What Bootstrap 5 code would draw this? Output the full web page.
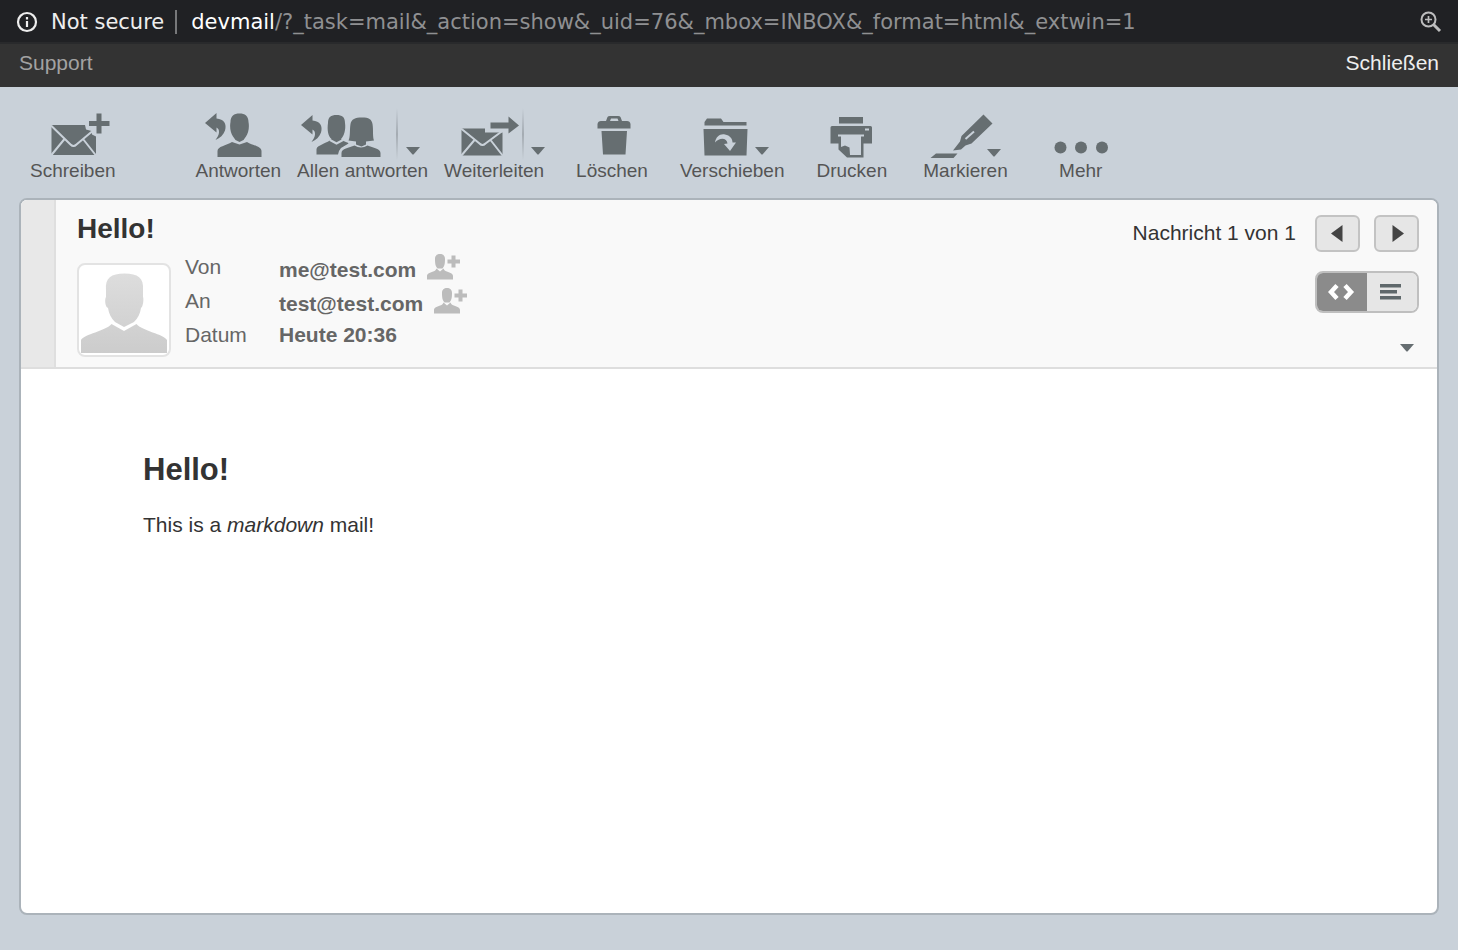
<!DOCTYPE html>
<html lang="de">
<head>
<meta charset="utf-8">
<meta name="viewport" content="width=device-width, initial-scale=1">
<title>Hello!</title>
<link href="https://cdn.jsdelivr.net/npm/bootstrap@5.3.0/dist/css/bootstrap.min.css" rel="stylesheet">
<style>
  body { background: #c9d1d9; color: #333; font: 21px/28px "Liberation Sans", Arial, sans-serif; }
  button { border: 0; background: none; padding: 0; color: inherit; }
  svg { display: block; }
  .address-bar { height: 44px; padding: 2px 16px 0; background: #202124; border-bottom: 2px solid #292a2c; color: #eee; font-family: "DejaVu Sans", sans-serif; }
  .address-bar .security { gap: 13px; }
  .address-bar .divider { width: 2px; height: 24px; background: #77787a; margin: 0 14px 0 11px; }
  .address-bar .host { color: #fff; }
  .address-bar .query { color: #8f9092; }
  .top-line { height: 43px; padding: 0 19px 5px; background: #333; }
  .top-line a { color: #eee; text-decoration: none; }
  .top-line a.muted-link { color: #a2a2a2; }
  .toolbar { padding: 21px 30px 16px; gap: 16px; font-size: 19px; line-height: 22px; color: #555; fill: #666e71; }
  .tool { display: flex; flex-direction: column; align-items: center; white-space: nowrap; }
  .cut { fill: none; stroke: #c9d1d9; stroke-width: 2; }
  .caret { position: absolute; top: 39px; right: 8px; }
  .caret.inset { right: 15px; }
  .caret.low { top: 41px; right: 7px; }
  .split::before { content: ""; position: absolute; top: 0; right: 30px; width: 2px; height: 52px; background: linear-gradient(transparent, #a4abb2, transparent); }
  .split.tight::before { right: 20px; }
  .split.tight .caret { right: -1px; }
  .gap-sm { margin-left: 16px; }
  .gap-md { margin-left: 20px; }
  .gap-lg { margin-left: 29px; }
  .gap-xl { margin-left: 64px; }
  .message { margin: 0 19px 35px; background: #fff; border: 2px solid #abb3ba; border-radius: 8px; }
  .message-head { background: #f9f9f9; border-bottom: 2px solid #dedede; min-height: 169px; }
  .side-strip { width: 35px; background: #e8e8e8; border-right: 2px solid #dfdfdf; }
  .head-main { padding: 15px 0 10px 21px; }
  .head-main h1 { font-size: 28px; line-height: 28px; font-weight: bold; margin: 0 0 10px; }
  .avatar { margin-top: 10px; border: 2px solid #e3e3e3; border-radius: 8px; background: #fff; width: 94px; height: 94px; }
  .fields { margin-left: 14px; color: #666; }
  .fields tr { height: 34px; }
  .fields th, .fields td { padding: 0; vertical-align: top; }
  .fields th { font-weight: normal; width: 94px; }
  .fields td { font-weight: bold; }
  .fields .address { padding-top: 3px; }
  .fields a { color: inherit; text-decoration: none; }
  .fields button { margin: -2px 0 0 11px; fill: #bcbcbc; }
  .head-side { padding: 15px 18px 0 0; }
  .pager { height: 37px; }
  .pager span { margin-right: 5px; padding-bottom: 1px; }
  .pager button { width: 45px; height: 37px; margin-left: 14px; border: 2px solid #c3c3c3; border-radius: 6px; background: #e6e6e6; fill: #444; }
  .views { border: 2px solid #bfbfbf; border-radius: 8px; overflow: hidden; margin-top: 19px; height: 42px; }
  .views button { width: 50px; background: #e6e6e6; }
  .views button.active { background: #8b8b8b; }
  .more-head { margin: 31px 5px 0 0; fill: #666e71; }
  .mail-body { padding: 83px 122px; }
  .mail-body h2 { font-size: 31px; line-height: 36px; font-weight: bold; margin: 0 0 23px; }
</style>
</head>
<body class="min-vh-100 d-flex flex-column">

<svg width="0" height="0" class="position-absolute" aria-hidden="true">
  <defs>
    <symbol id="down" viewBox="0 0 14 8"><path d="M0 0H14L7.500 7.500H6.500Z"/></symbol>
    <symbol id="reply" viewBox="0 0 22 28"><path d="M0 10 11.500 0V5.500C19 6 22 11 20 17.500C18.500 22 15 25 10.500 27C14.500 22 15.500 16.500 11.500 14.500V19.500Z"/></symbol>
    <symbol id="add-person" viewBox="0 0 34 26"><path d="M8 5C8 1.500 10 0 13 0S18 1.500 18 5C18 10 17.500 12 15.500 14.500H10.500C8.500 12 8 10 8 5ZM0 25.500V22C0 19 4 18.500 7.500 17C8.500 16.500 9 15.500 9.500 14.500L13 17.500L16.500 14.500C17 15.500 17.500 16.500 18.500 17C22 18.500 26 19 26 22V25.500ZM24.500 1.500H28.500V5.500H33V9.500H28.500V13.500H24.500V9.500H20.500V5.500H24.500Z"/></symbol>
  </defs>
</svg>

<header>
  <div class="address-bar d-flex align-items-center">
    <button type="button" class="security d-flex align-items-center text-nowrap">
      <svg width="22" height="22" viewBox="0 0 22 22" fill="none" stroke="#eee" stroke-width="2.2"><circle cx="11" cy="11" r="9"/><path d="M11 10V16M11 6V8.400"/></svg>
      Not secure
    </button>
    <span class="divider"></span>
    <span class="host text-nowrap">devmail<span class="query">/?_task=mail&amp;_action=show&amp;_uid=76&amp;_mbox=INBOX&amp;_format=html&amp;_extwin=1</span></span>
    <button type="button" class="ms-auto" aria-label="Zoom">
      <svg width="22" height="22" viewBox="0 0 22 22" fill="none" stroke="#bdbdbe"><circle cx="8.500" cy="8.500" r="7" stroke-width="2"/><path d="M13.500 13.500 20 20" stroke-width="3"/><path d="M5 8.500H12M8.500 5V12" stroke-width="1.700"/></svg>
    </button>
  </div>
  <nav class="top-line d-flex align-items-center justify-content-between">
    <a class="muted-link" href="#">Support</a>
    <a href="#">Schließen</a>
  </nav>
</header>

<div class="toolbar d-flex" role="toolbar" aria-label="Nachricht">
  <button type="button" class="tool">
    <svg width="84" height="52" viewBox="31 108 84 52"><path d="M51.500 125H85L86 129.500L91.500 131L92 134.500L96 136.500V155H51.500ZM96.500 113.500H101.500V121H109.500V126H101.500V133.500H96.500V126H89V121H96.500Z"/><path class="cut" d="M51 125.500 70.500 144.500Q73.500 147.500 76.500 144.500L92 131.500M51 155.500 64.500 139M96 155.500 83 139"/></svg>
    Schreiben
  </button>
  <button type="button" class="tool gap-xl">
    <svg width="84" height="52" viewBox="196 108 84 52"><use href="#reply" x="205" y="113" width="22" height="28"/><path d="M230.500 122C230.500 116 234 113.500 239.500 113.500S248.500 116 248.500 122C249.500 127 248.500 133 246 136.500L243.500 140L239.500 142L235.500 140L233 136.500C230.500 133 229.500 127 230.500 122ZM217.500 157V151C217.500 146.500 226 145.500 232 142L239.500 144.500L247 142C253 145.500 261.500 146.500 261.500 151V157Z"/></svg>
    Antworten
  </button>
  <div class="position-relative split">
    <button type="button" class="tool">
      <svg width="128" height="52" viewBox="299 108 128 52"><use href="#reply" x="301" y="115" width="22" height="28"/><path d="M328 123C328 117 331 115 336.500 115S345 117 345 123C346 130 344 136 341 139C343 142 348 142 348.500 143.500L341 148Q339 150 338 154.500H316.500V149C317 145 328 143 331.500 139C328 136 327 130 328 123Z"/><path class="cut" d="M330 140 336.500 143.500 343 140" stroke-width="1.500"/><path d="M348.500 140.500C350.500 137 349.500 130 350.500 124C351.500 119 355 117.500 362 117.500S371.500 119 372.500 124C373.500 130 372.500 137 374 140.500L366 141.500V144.500L361.500 146.500L356 144.500V141.500ZM341.500 157V153C341.500 148.500 349 148 354.500 145.500Q361 149.500 367.500 145.500C373 148 380.500 148.500 380.500 153V157Z"/></svg>
      Allen antworten
    </button>
    <button type="button" class="caret" aria-label="Antwortoptionen"><svg width="14" height="8"><use href="#down"/></svg></button>
  </div>
  <div class="position-relative split tight">
    <button type="button" class="tool">
      <svg width="98" height="52" viewBox="445 108 98 52"><path d="M461.500 128.500H485V132.500H502.500V155.500H461.500ZM490.500 122.500H508.500V116.500L519 125.500L508.500 133.500V128.500H490.500Z"/><path class="cut" d="M461 128.500 479.500 143.500Q482.500 146.500 485.500 143.500L503 130.500M461 156 474.500 140M503 156 490.500 140"/></svg>
      Weiterleiten
    </button>
    <button type="button" class="caret" aria-label="Weiterleitungsoptionen"><svg width="14" height="8"><use href="#down"/></svg></button>
  </div>
  <button type="button" class="tool gap-sm">
    <svg width="70" height="52" viewBox="577 108 70 52"><path d="M597.500 128.500V124Q598 121 601 121H606L607.500 117Q608 116 610 116H618Q620 116 620.500 117L622 121H627Q630 121 630.500 124V128.500ZM610 121H618.500L617.500 118.500H611ZM601.500 131H627L625.500 154.500H603Z" fill-rule="evenodd"/></svg>
    Löschen
  </button>
  <div class="position-relative gap-sm">
    <button type="button" class="tool">
      <svg width="102" height="52" viewBox="682 108 102 52"><path d="M705.500 125.500V122L708 118.500H722L724.500 122H747.500V125.500ZM704.500 129H748.500L747.500 155.500H705.500Z"/><path fill="#c9d1d9" d="M716 142.500C717 136.500 721 133.500 726 134.500C731 135.500 733.500 138.500 733.500 142.500L737 142.500L731 151L725 144L728.500 143.500C728 138 721 137 716 142.500Z"/></svg>
      Verschieben
    </button>
    <button type="button" class="caret inset" aria-label="Ordner wählen"><svg width="14" height="8"><use href="#down"/></svg></button>
  </div>
  <button type="button" class="tool gap-sm">
    <svg width="70" height="52" viewBox="817 108 70 52"><path d="M839 117H863V123.500H839ZM830.500 143.500V127.500Q830.500 126 832 126H870.500Q872 126 872 127.500V143.500H863.500V157.500H847L838.500 149.500V143.500Z"/><path fill="#c9d1d9" d="M838 134.500H864V136.500H861V155H850L849.500 147.500L845 145.500L841 147V136.500H838ZM865 128.500H869V130.500H865Z"/></svg>
    Drucken
  </button>
  <div class="position-relative gap-md">
    <button type="button" class="tool">
      <svg width="84" height="52" viewBox="924 108 84 52"><path d="M937 153.500H958.500L954.500 158H931.500ZM984.500 114.500 993.500 123.500 972.500 143.500 966.500 145.500 962 149.500 954 150.500 961 141.500 962.500 136Z"/><path class="cut" d="M966.500 139 975 131.500"/></svg>
      Markieren
    </button>
    <button type="button" class="caret low" aria-label="Markierung wählen"><svg width="14" height="8"><use href="#down"/></svg></button>
  </div>
  <button type="button" class="tool gap-lg">
    <svg width="56" height="52" viewBox="1053 108 56 52"><circle cx="1060.500" cy="147.500" r="6"/><circle cx="1081" cy="147.500" r="6"/><circle cx="1102" cy="147.500" r="6"/></svg>
    Mehr
  </button>
</div>

<main class="message flex-grow-1 overflow-hidden">
  <section class="message-head d-flex">
    <div class="side-strip flex-shrink-0"></div>
    <div class="head-main flex-grow-1">
      <h1>Hello!</h1>
      <div class="d-flex">
        <div class="avatar flex-shrink-0">
          <svg width="90" height="90" viewBox="79 265 90 90"><defs><linearGradient id="shade" x2="0" y2="1"><stop stop-color="#ddd"/><stop offset="1" stop-color="#ccc"/></linearGradient></defs><path fill="url(#shade)" d="M106 290C105 278 111 273.500 124.500 273.500S144 278 143 290V297C144 299 143 307 141 308C140 314 138 318 134 322L124 327L115 322C111 318 109 314 108 308C105 307 104.500 299 106 297ZM81 353V340C84 334 106 331 111.500 324L124 331L136.500 324C142 331 164 334 167 340V353Z"/></svg>
        </div>
        <table class="fields align-self-start">
          <tbody>
            <tr><th scope="row">Von</th><td class="address"><div class="d-flex align-items-start"><a href="#">me@test.com</a><button type="button" aria-label="me@test.com zum Adressbuch hinzufügen"><svg width="34" height="26"><use href="#add-person"/></svg></button></div></td></tr>
            <tr><th scope="row">An</th><td class="address"><div class="d-flex align-items-start"><a href="#">test@test.com</a><button type="button" aria-label="test@test.com zum Adressbuch hinzufügen"><svg width="34" height="26"><use href="#add-person"/></svg></button></div></td></tr>
            <tr><th scope="row">Datum</th><td>Heute 20:36</td></tr>
          </tbody>
        </table>
      </div>
    </div>
    <div class="head-side d-flex flex-column align-items-end">
      <div class="pager d-flex align-items-center">
        <span class="text-nowrap">Nachricht 1 von 1</span>
        <button type="button" class="d-flex align-items-center justify-content-center" aria-label="Vorherige Nachricht"><svg width="16" height="18"><path d="M1 8.500 12.500 0V17Z"/></svg></button>
        <button type="button" class="d-flex align-items-center justify-content-center" aria-label="Nächste Nachricht"><svg width="16" height="18"><path d="M15 8.500 3.500 0V17Z"/></svg></button>
      </div>
      <div class="views d-flex">
        <button type="button" class="active d-flex align-items-center justify-content-center" aria-label="HTML"><svg width="28" height="18" fill="none" stroke="#fff" stroke-width="4.500"><path d="M9 2.500 3 9 9 15.500M17 2.500 23 9 17 15.500"/></svg></button>
        <button type="button" class="d-flex align-items-center justify-content-center" aria-label="Text"><svg width="26" height="16" fill="#5f686b"><path d="M1 0H22V3.500H1ZM1 6H18V9.500H1ZM1 12H22V15.500H1Z"/></svg></button>
      </div>
      <button type="button" class="more-head" aria-label="Details anzeigen"><svg width="14" height="8"><use href="#down"/></svg></button>
    </div>
  </section>
  <article class="mail-body">
    <h2>Hello!</h2>
    <p class="mb-0">This is a <em>markdown</em> mail!</p>
  </article>
</main>

<script src="https://cdn.jsdelivr.net/npm/bootstrap@5.3.0/dist/js/bootstrap.bundle.min.js"></script>
</body>
</html>
